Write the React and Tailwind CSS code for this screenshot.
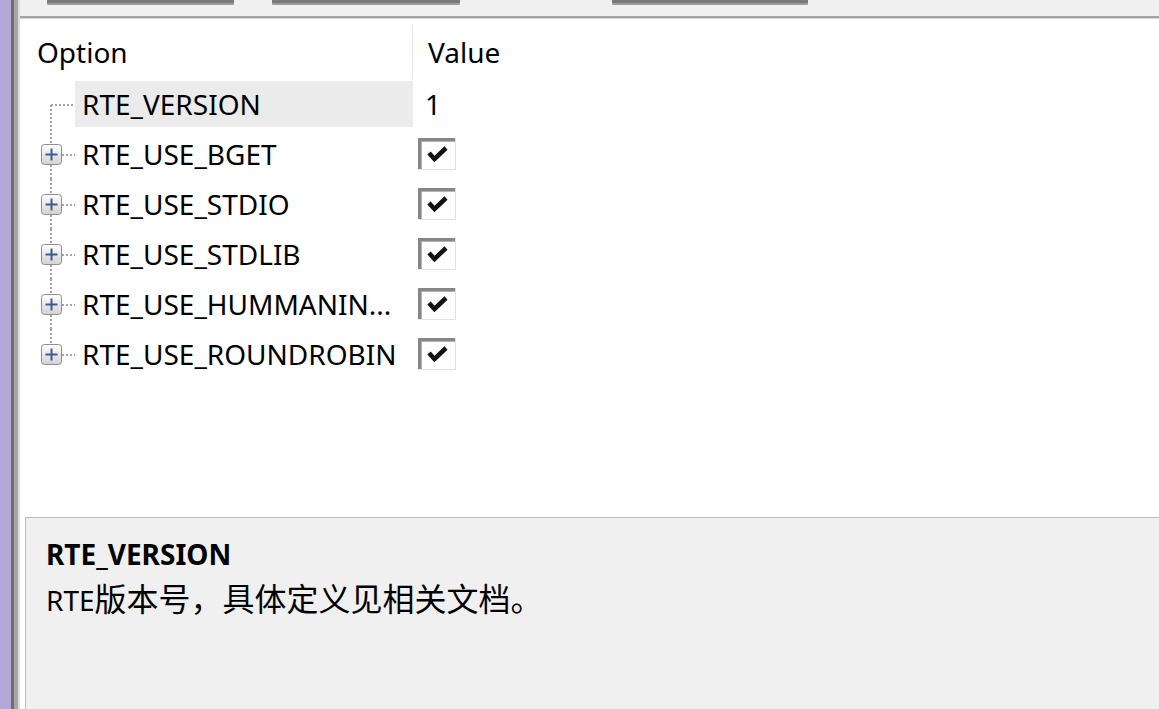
const rows = [
  { name: "RTE_VERSION", value: "1", kind: "first" },
  { name: "RTE_USE_BGET", check: true },
  { name: "RTE_USE_STDIO", check: true },
  { name: "RTE_USE_STDLIB", check: true },
  { name: "RTE_USE_HUMMANIN...", check: true },
  { name: "RTE_USE_ROUNDROBIN", check: true, kind: "last" },
];

function TreeGutter({ kind }) {
  const dot = { stroke: "#a3a3a3", strokeWidth: 2, strokeDasharray: "2 2" };
  return (
    <svg width="55" height="50" viewBox="0 0 55 50" className="shrink-0">
      {kind === "first" ? (
        <>
          <line x1="31" y1="26" x2="31" y2="50" {...dot} />
          <line x1="31" y1="26" x2="60" y2="26" {...dot} />
        </>
      ) : (
        <>
          <line x1="31" y1="0" x2="31" y2="15" {...dot} />
          {kind !== "last" && <line x1="31" y1="36" x2="31" y2="50" {...dot} />}
          <line x1="42" y1="26" x2="60" y2="26" {...dot} />
          <defs>
            <linearGradient id="pb" x1="0" y1="0" x2="0" y2="1">
              <stop offset="0" stopColor="#ffffff" />
              <stop offset="1" stopColor="#d2d2d2" />
            </linearGradient>
          </defs>
          <rect x="21.5" y="15.5" width="20" height="20" rx="3" fill="url(#pb)" stroke="#8e8e8e" />
          <line x1="25.5" y1="25.5" x2="37.5" y2="25.5" stroke="#3d5a96" strokeWidth="2" />
          <line x1="31.5" y1="19.5" x2="31.5" y2="31.5" stroke="#3d5a96" strokeWidth="2" />
        </>
      )}
    </svg>
  );
}

function CheckBox() {
  return (
    <svg width="38" height="32" viewBox="0 0 38 32">
      <rect x="0" y="0" width="38" height="32" fill="#ffffff" />
      <rect x="0" y="0" width="38" height="3" fill="#868686" />
      <rect x="0" y="0" width="3" height="32" fill="#868686" />
      <rect x="3" y="3" width="34" height="1" fill="#b4b4b4" />
      <rect x="3" y="3" width="1" height="28" fill="#b4b4b4" />
      <rect x="37" y="0" width="1" height="32" fill="#e2e2e2" />
      <rect x="0" y="31" width="38" height="1" fill="#e2e2e2" />
      <path d="M11 15 L16.5 21 L28 10" fill="none" stroke="#111" strokeWidth="4.5" />
    </svg>
  );
}

export default function App() {
  return (
    <div
      className="w-[1159px] h-[709px] flex overflow-hidden bg-white text-black"
      style={{ fontFamily: '"Noto Sans", "Noto Sans CJK SC", sans-serif' }}
    >
      {/* window edge */}
      <div className="w-[11px] bg-[#b4a8d8]" />
      <div className="w-[3px] bg-[#6e6e6e]" />
      <div className="w-[4px] bg-[#a6a6a6]" />
      <div className="w-[2px] bg-[#dcdcdc]" />

      <div className="flex-1 flex flex-col min-w-0">
        {/* button bottoms */}
        <div className="h-[16px] bg-[#f0f0f0] flex items-start">
          <div className="ml-[27px] w-[187px] h-[5px] bg-[#7a7a7a] border-b-2 border-[#9c9c9c] rounded-b-[1px]" />
          <div className="ml-[38px] w-[188px] h-[5px] bg-[#7a7a7a] border-b-2 border-[#9c9c9c] rounded-b-[1px]" />
          <div className="ml-[152px] w-[196px] h-[5px] bg-[#7a7a7a] border-b-2 border-[#9c9c9c] rounded-b-[1px]" />
        </div>
        <div className="h-[2px] bg-[#a3a3a3]" />
        <div className="h-[1px] bg-[#d4d4d4]" />

        {/* tree */}
        <div className="flex-1 text-[28px]">
          <div className="h-[60px] flex items-center pt-[6px]">
            <div className="w-[393px] pl-[17px] self-stretch flex items-center border-r border-[#e6e6e6]">Option</div>
            <div className="pl-[15px]">Value</div>
          </div>
          {rows.map((r) => (
            <div key={r.name} className="h-[50px] flex items-center">
              <TreeGutter kind={r.kind} />
              <div
                className={`w-[338px] h-[46px] pl-[7px] flex items-center whitespace-nowrap overflow-hidden ${
                  r.kind === "first" ? "bg-[#ebebeb]" : ""
                }`}
              >
                {r.name}
              </div>
              <div className="pl-[5px] flex items-center">
                {r.check ? <CheckBox /> : <span className="pl-[7px]">{r.value}</span>}
              </div>
            </div>
          ))}
        </div>

        {/* description */}
        <div className="h-[192px] ml-[5px] bg-[#f0f0f0] border-t border-l border-[#bdbdbd] pl-[20px] pt-[16px] text-[28px]">
          <div className="h-[40px] leading-[40px] font-bold">RTE_VERSION</div>
          <div className="leading-[46px] whitespace-nowrap">
            RTE<span className="text-[32px]" style={{ fontFamily: '"Noto Sans CJK SC", sans-serif' }}>版本号，具体定义见相关文档。</span>
          </div>
        </div>
      </div>
    </div>
  );
}
